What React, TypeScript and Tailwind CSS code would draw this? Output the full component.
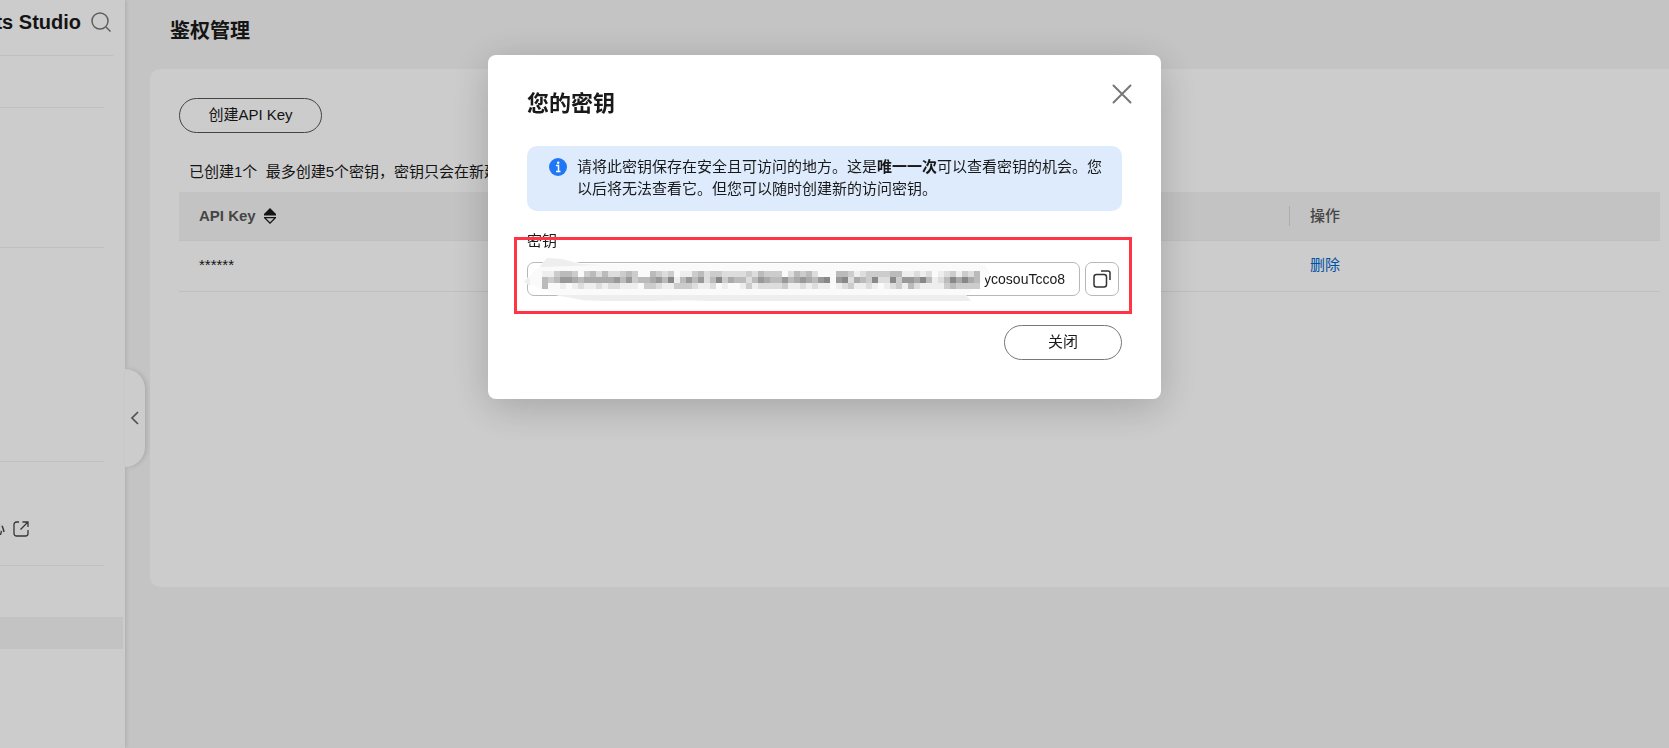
// One string per mosaic row, a hex digit per 6px block (f stays clear)
const MOSAIC = [
  "eecbbcfcbdbddcbcffbcdcfeecbdccddddcdbcccfdbcbdfffbbcedccccbbeededfedcecdb",
  "bcb99abaaaaa9b9cbba9b8eb9b9db8cabbdb9abb9ba9ab98f98dabc8dd8c99a8bedb8a8ab",
  "bffefedeededdeeefccdeecccdeedfeffeceddddceededeefedceedefedcebdeeeecbcccc",
];

// Mosaic that hides most of the key
function Redaction() {
  return (
    <svg
      aria-hidden="true"
      className="pointer-events-none absolute -top-2.5 -left-1 h-[52px] w-[470px]"
      viewBox="0 0 470 52"
    >
      <path d="M1 30 24 6 39 7 62 12 450 12 462 13 467 21 458 30 443 43 448 49 62 49 37 44Z" fill="#fafafa" />
      <path d="M24 6 39 7 56 12 78 13 17 15Z" fill="#eee" />
      <path d="M1 30 5 25 7 28V34Z" fill="#eee" />
      <path d="M32 43H443L448 49H188L160 48 130 49H80L60 48Z" fill="#eee" />
      {MOSAIC.map((row, y) =>
        row.split("").map((c, x) =>
          c === "f" ? null : (
            <rect
              key={`${x}-${y}`}
              x={19 + x * 6}
              y={19 + y * 6}
              width={6}
              height={6}
              fill={"#" + c + c + c}
              shapeRendering="crispEdges"
            />
          )
        )
      )}
    </svg>
  );
}

function Sidebar() {
  return (
    <aside className="relative w-[125px] shrink-0 bg-white shadow-[1px_0_4px_rgba(0,0,0,0.12)]">
      <div className="overflow-hidden">
        <div className="mr-3 flex h-14 items-center justify-end gap-2.5 border-b border-[#f0f0f0] pr-0.5 pb-3">
          <span className="shrink-0 text-xl font-bold whitespace-nowrap">ts Studio</span>
          <button type="button" aria-label="搜索" className="shrink-0">
            <svg width="20" height="20" viewBox="0 0 20 20" fill="none" stroke="#777" strokeWidth="1.5">
              <circle cx="9" cy="9" r="8" />
              <path d="M15 15 19.5 19.5" />
            </svg>
          </button>
        </div>
        <nav className="flex flex-col">
          <div className="mr-[21px] h-[52px] border-b border-[#f0f0f0]" />
          <div className="mr-[21px] h-[140px] border-b border-[#f0f0f0]" />
          <div className="mr-[21px] h-[214px] border-b border-[#f0f0f0]" />
          <div className="mr-[21px] flex h-[104px] items-center border-b border-[#f0f0f0] pt-[30px]">
            <a href="#" className="-ml-2.5 flex items-center gap-2 text-[15px]">
              心
              <svg width="16" height="16" viewBox="0 0 16 16" fill="none" stroke="#444" strokeWidth="1.3">
                <path d="M6 1H3.5A2.5 2.5 0 0 0 1 3.5V12.5A2.5 2.5 0 0 0 3.5 15H12.5A2.5 2.5 0 0 0 15 12.5V9" />
                <path d="M9.5 1H15V6M15 1 7.5 8.5" />
              </svg>
            </a>
          </div>
          <div className="mt-[51px] mr-0.5 h-8 bg-[#f4f4f4]" />
        </nav>
      </div>
      {/* Collapse handle */}
      <button
        type="button"
        aria-label="收起"
        className="absolute top-[369px] left-full flex h-[98px] w-5 items-center rounded-r-[20px] bg-white pl-1 shadow-[2px_0_4px_rgba(0,0,0,0.12)]"
      >
        <svg width="12" height="14" viewBox="0 0 12 14" fill="none" stroke="#666" strokeWidth="1.7">
          <path d="M9 1 3 7 9 13" />
        </svg>
      </button>
    </aside>
  );
}

function KeyTable() {
  return (
    <table className="w-full table-fixed text-left text-[15px]">
      <thead>
        <tr className="h-12 border-b border-[#efefef] bg-[#f4f4f4] text-[#575757]">
          <th className="pl-5 font-bold">
            <div className="flex items-center gap-2">
              API Key
              <svg width="12" height="16" viewBox="0 0 12 16" aria-hidden="true">
                <path d="M6 0 12 6V7.5H0V6Z" fill="#191919" />
                <path d="M0 9H12V10L6 16 0 10ZM2 10.2 6 14.2 10 10.2Z" fill="#191919" fillRule="evenodd" />
              </svg>
            </div>
          </th>
          <th className="w-[371px] font-medium">
            <div className="h-5 border-l border-[#d9d9d9] pl-5 leading-5">操作</div>
          </th>
        </tr>
      </thead>
      <tbody>
        <tr className="h-[51px] border-b border-[#efefef]">
          <td className="pl-5">******</td>
          <td className="pl-[21px]">
            <a href="#" className="text-[#0067d1]">删除</a>
          </td>
        </tr>
      </tbody>
    </table>
  );
}

function KeyDialog() {
  return (
    <div className="fixed inset-0 flex items-start justify-center bg-black/20 pt-[55px] pr-5">
      <div
        role="dialog"
        aria-labelledby="dialog-title"
        className="relative w-[673px] rounded-lg bg-white px-[39px] pt-[29px] pb-[39px] shadow-[0_8px_40px_rgba(0,0,0,0.2)]"
      >
        <div className="-mr-[10px] flex h-[62px] items-start justify-between">
          <h2 id="dialog-title" className="pt-1 text-[22px] leading-8 font-bold">您的密钥</h2>
          <button type="button" aria-label="关闭对话框">
            <svg width="20" height="20" viewBox="0 0 20 20" fill="none" stroke="#777" strokeWidth="2" strokeLinecap="round">
              <path d="M1.5 1.5 18.5 18.5M18.5 1.5 1.5 18.5" />
            </svg>
          </button>
        </div>
        <div className="flex gap-2.5 rounded-[10px] bg-[#deebfd] pt-2.5 pr-4 pb-[11px] pl-[22px]">
          <svg className="mt-0.5 shrink-0" width="18" height="18" viewBox="0 0 18 18" aria-hidden="true">
            <circle cx="9" cy="9" r="9" fill="#1f77f5" />
            <path d="M7 7.5H9.5V13M7 13.5H11.5" stroke="#fff" strokeWidth="1.5" fill="none" />
            <circle cx="9.2" cy="4.7" r="1.2" fill="#fff" />
          </svg>
          <p className="text-[15px] leading-[22px]">
            请将此密钥保存在安全且可访问的地方。这是<b>唯一一次</b>可以查看密钥的机会。您以后将无法查看它。但您可以随时创建新的访问密钥。
          </p>
        </div>
        <label htmlFor="secret" className="mt-5 block text-[15px] leading-5">密钥</label>
        <div className="relative mt-[11px] flex gap-[5px]">
          <input
            id="secret"
            readOnly
            defaultValue="ycosouTcco8"
            className="h-[34px] w-[553px] rounded-[7px] border border-[#b8b8b8] px-3.5 text-right text-sm"
          />
          <button type="button" aria-label="复制" className="flex h-[34px] w-[34px] items-center justify-center rounded-[7px] border border-[#b8b8b8]">
            <svg width="18" height="18" viewBox="0 0 18 18" fill="none" stroke="#333" strokeWidth="1.5">
              <rect x="1" y="4.5" width="12.5" height="12.5" rx="2.5" />
              <path d="M8 1H15A2 2 0 0 1 17 3V10" />
            </svg>
          </button>
          <Redaction />
        </div>
        <div className="mt-[29px] flex justify-end">
          <button type="button" className="h-[35px] w-[118px] rounded-full border border-[#777] text-[15px]">关闭</button>
        </div>
        {/* Highlight frame */}
        <div className="pointer-events-none absolute top-[182px] left-[26px] h-[77px] w-[618px] border-3 border-[#ff3545]" />
      </div>
    </div>
  );
}

export default function App() {
  return (
    <div className="flex min-h-screen bg-[#f5f5f5] font-['Liberation_Sans','Noto_Sans_CJK_SC',sans-serif] text-[#191919]">
      <Sidebar />
      <main className="min-w-0 flex-1 pl-[25px]">
        <h1 className="pt-4 pb-[23px] pl-5 text-xl leading-[30px] font-bold">鉴权管理</h1>
        <section className="min-h-[518px] rounded-l-[10px] bg-white pt-[29px] pr-[9px] pl-[29px]">
          <button type="button" className="h-[35px] w-[143px] rounded-full border border-[#555] text-[15px]">创建API Key</button>
          <p className="mt-[27px] mb-2 pl-2.5 text-[15px] leading-6 whitespace-pre">已创建1个  最多创建5个密钥，密钥只会在新建</p>
          <KeyTable />
        </section>
      </main>
      <KeyDialog />
    </div>
  );
}
